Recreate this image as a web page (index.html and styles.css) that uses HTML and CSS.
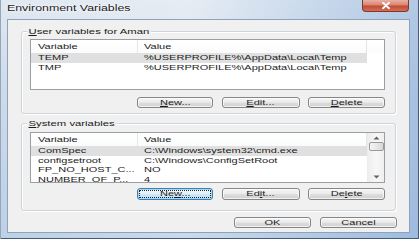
FILE: index.html
```html
<!DOCTYPE html>
<html>
<head>
<meta charset="utf-8">
<title>Environment Variables</title>
<link rel="stylesheet" href="styles.css">
</head>
<body>
<div class="window">
  <div class="titlebar">
    <span class="title t">Environment Variables</span>
    <div class="close">
      <svg width="12" height="7" viewBox="0 0 12 7"><path d="M3 0.8 L9 6.2 M9 0.8 L3 6.2" stroke="#fff" stroke-width="1.9" stroke-linecap="round"/></svg>
    </div>
  </div>
  <div class="client">
    <fieldset class="group g1">
      <legend class="legend"><span class="t lbl"><u>U</u>ser variables for Aman</span></legend>
      <div class="list">
        <div class="list-main">
          <div class="hdr">
            <div class="hcell c1"><span class="t">Variable</span></div>
            <div class="hcell c2"><span class="t">Value</span></div>
            <div class="hcell c3"></div>
          </div>
          <div class="row sel">
            <div class="cell c1"><span class="t">TEMP</span></div>
            <div class="cell c2"><span class="t">%USERPROFILE%\AppData\Local\Temp</span></div>
          </div>
          <div class="row">
            <div class="cell c1"><span class="t">TMP</span></div>
            <div class="cell c2"><span class="t">%USERPROFILE%\AppData\Local\Temp</span></div>
          </div>
        </div>
      </div>
      <div class="btnrow">
        <div class="btn w76"><span class="t"><u>N</u>ew...</span></div>
        <div class="btn w78"><span class="t"><u>E</u>dit...</span></div>
        <div class="btn w77"><span class="t"><u>D</u>elete</span></div>
      </div>
    </fieldset>

    <fieldset class="group g2">
      <legend class="legend"><span class="t lbl"><u>S</u>ystem variables</span></legend>
      <div class="list">
        <div class="list-main">
          <div class="hdr">
            <div class="hcell c1"><span class="t">Variable</span></div>
            <div class="hcell c2"><span class="t">Value</span></div>
          </div>
          <div class="row sel">
            <div class="cell c1"><span class="t">ComSpec</span></div>
            <div class="cell c2"><span class="t">C:\Windows\system32\cmd.exe</span></div>
          </div>
          <div class="row">
            <div class="cell c1"><span class="t">configsetroot</span></div>
            <div class="cell c2"><span class="t">C:\Windows\ConfigSetRoot</span></div>
          </div>
          <div class="row">
            <div class="cell c1"><span class="t">FP_NO_HOST_C...</span></div>
            <div class="cell c2"><span class="t">NO</span></div>
          </div>
          <div class="row">
            <div class="cell c1"><span class="t">NUMBER_OF_P...</span></div>
            <div class="cell c2"><span class="t">4</span></div>
          </div>
        </div>
        <div class="vscroll">
          <div class="arrow up"><svg width="7" height="4" viewBox="0 0 7 4"><path d="M0.5 3.5 L3.5 0.5 L6.5 3.5 Z" fill="#606060"/></svg></div>
          <div class="thumb"></div>
          <div class="track"></div>
          <div class="arrow down"><svg width="7" height="4" viewBox="0 0 7 4"><path d="M0.5 0.5 L3.5 3.5 L6.5 0.5 Z" fill="#606060"/></svg></div>
        </div>
      </div>
      <div class="btnrow">
        <div class="btn w76 focus"><span class="t">Ne<u>w</u>...</span></div>
        <div class="btn w78"><span class="t">Ed<u>i</u>t...</span></div>
        <div class="btn w77"><span class="t">De<u>l</u>ete</span></div>
      </div>
    </fieldset>

    <div class="btnrow dlg">
      <div class="btn w77"><span class="t">OK</span></div>
      <div class="btn w77"><span class="t">Cancel</span></div>
    </div>
  </div>
</div>
</body>
</html>
```
FILE: styles.css
```css
html, body {
  margin: 0;
  padding: 0;
}
body {
  width: 419px;
  height: 239px;
  overflow: hidden;
  font-family: "Liberation Sans", Arial, sans-serif;
  background: #c9d8ea;
}
.t {
  display: inline-block;
  transform: scaleX(1.49);
  transform-origin: 0 50%;
  white-space: nowrap;
}
u {
  text-decoration-thickness: 1px;
  text-underline-offset: 1px;
}
.window {
  box-sizing: border-box;
  width: 419px;
  height: 239px;
  padding: 0 9px 6px 7px;
  display: flex;
  flex-direction: column;
  background:
    linear-gradient(to right, rgba(255,255,255,0) 0%, rgba(255,255,255,0.2) 45%, rgba(110,155,210,0.4) 100%),
    linear-gradient(to bottom, #e0e8f1 0%, #cddaea 40%, #bdd0e6 100%);
  box-shadow: inset 1px 0 #95a6ba, inset -1px -1px #465a76;
}
.titlebar {
  height: 19px;
  display: flex;
  justify-content: space-between;
  align-items: flex-start;
}
.title {
  font-size: 8.3px;
  line-height: 16px;
  color: #1a1a1a;
  text-shadow: 0 0 4px #fff, 0 0 2px #fff;
}
.close {
  box-sizing: border-box;
  width: 47px;
  height: 12px;
  margin-right: 1px;
  border: 1px solid #7a3a30;
  border-top: none;
  border-radius: 0 0 4px 4px;
  background: linear-gradient(#eab0a2 0%, #d98572 45%, #c44b34 55%, #d46e55 100%);
  display: flex;
  align-items: center;
  justify-content: center;
}
.client {
  flex: 1;
  background: #f0f0f0;
  border: 1px solid #8ea3bb;
  display: flex;
  flex-direction: column;
}
.group {
  margin: 0 13px;
  padding: 0;
  min-width: 0;
  border: 1px solid #cdd5dc;
  border-radius: 3px;
  box-shadow: 1px 1px 0 #fff, inset 1px 1px 0 #fff;
}
.g1 {
  margin-top: 7px;
  padding-top: 3px;
  padding-bottom: 4.7px;
}
.g2 {
  margin-top: 5px;
  padding-top: 4px;
  padding-bottom: 10.4px;
}
.legend {
  margin-left: 5px;
  padding: 0;
  height: 9px;
  font-size: 7.6px;
  line-height: 9px;
  color: #1a1a1a;
}
.lbl {
  background: #f0f0f0;
  padding: 0 1px;
}
.list {
  box-sizing: border-box;
  height: 51px;
  margin: 0 10px 0 8px;
  border: 1px solid #9a9ea5;
  background: #fff;
  display: flex;
  overflow: hidden;
}
.list-main {
  flex: 1;
  display: flex;
  flex-direction: column;
}
.hdr {
  display: grid;
  grid-template-columns: 107px 229px 1fr;
  height: 13px;
  flex: none;
}
.hcell {
  box-sizing: border-box;
  border-right: 1px solid #e4e7ea;
  font-size: 7.4px;
  line-height: 13px;
  color: #222;
  background: linear-gradient(#ffffff, #fafbfc);
}
.hdr .c3 {
  border-right: none;
}
.row {
  display: grid;
  grid-template-columns: 107px 229px;
  height: 9.6px;
  flex: none;
  font-size: 7.4px;
  line-height: 9.6px;
  color: #1c1c1c;
}
.c1 {
  padding-left: 7px;
}
.c2 {
  padding-left: 6px;
}
.row.sel .cell {
  background: #e0e0e0;
}
.vscroll {
  width: 17px;
  flex: none;
  display: flex;
  flex-direction: column;
  background: linear-gradient(to right, #eeeeee, #f7f7f7 50%, #eeeeee);
  border-left: 1px solid #ececec;
}
.arrow {
  height: 9.5px;
  display: flex;
  align-items: center;
  justify-content: center;
  flex: none;
}
.thumb {
  box-sizing: border-box;
  height: 9px;
  margin: 0 1px;
  border: 1px solid #9a9a9a;
  border-radius: 2px;
  background: linear-gradient(to right, #f5f5f5, #e8e8e8 50%, #d8d8d8);
  flex: none;
}
.track {
  flex: 1;
}
.btnrow {
  display: flex;
  justify-content: flex-end;
  gap: 8.5px;
  margin: 6.7px 10px 0 0;
}
.g2 .btnrow {
  margin-top: 5px;
}
.dlg {
  margin: 5.7px 12px 0 0;
  gap: 9px;
}
.btn {
  box-sizing: border-box;
  height: 11.6px;
  border: 1px solid #858585;
  border-radius: 3px;
  background: linear-gradient(#f4f4f4 0%, #ececec 48%, #dedede 52%, #d0d0d0 100%);
  box-shadow: inset 0 0 0 1px rgba(255,255,255,0.7);
  display: flex;
  align-items: center;
  justify-content: center;
  font-size: 7.4px;
  line-height: 9px;
  color: #1c1c1c;
}
.btn .t {
  transform-origin: 50% 50%;
}
.w76 { width: 76px; }
.w77 { width: 77px; }
.w78 { width: 78px; }
.btn.focus {
  border-color: #3c7fb1;
  background: linear-gradient(#eef7fd 0%, #e3f1fb 48%, #cfe7f7 52%, #c0dff4 100%);
  box-shadow: inset 0 0 0 1px #a8d8f6;
  outline: 1px dotted #222;
  outline-offset: -3px;
}
```
